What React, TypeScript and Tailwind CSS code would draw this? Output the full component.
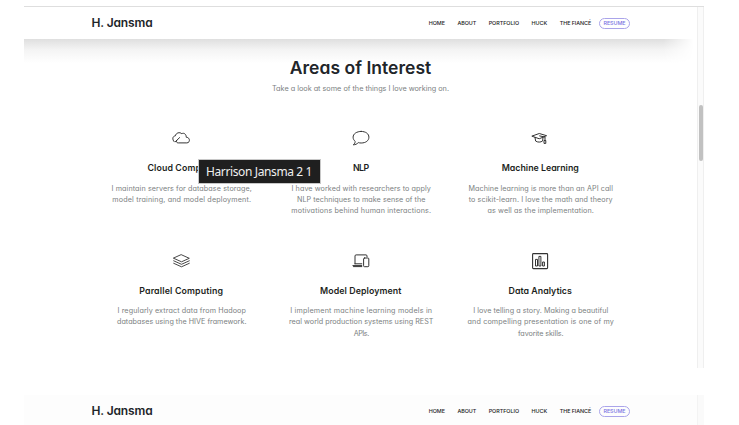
import type { ReactNode } from "react";

type Line = { text: string; tracking: string };

type Area = { icon: ReactNode; title: Line; lines: Line[] };

const iconProps = {
  fill: "none",
  stroke: "#333",
  strokeWidth: 1,
  strokeLinecap: "round" as const,
  strokeLinejoin: "round" as const,
  className: "h-[18px] w-[18px]",
  viewBox: "0 0 18 18",
};

const CloudIcon = () => (
  <svg {...iconProps}>
    <path d="M3.4 12.6 L7.6 8.6 M2.4 12.9 C-.1 10.6 .4 7.2 3.4 6.8 C3.9 3.9 7.6 2.7 9.8 4.7 C12 3.4 14.4 5.4 14.2 8.2 C18.3 8.3 18.4 13.9 14.8 13.9 H6.3 C4.4 13.9 4 12.6 4.6 11.6" />
  </svg>
);

const BubbleIcon = () => (
  <svg {...iconProps}>
    <path d="M9.2 2.4 C13.8 2.4 16.9 4.8 16.9 8.2 C16.9 11.6 13.8 14 9.2 14 C8.2 14 7.2 13.9 6.3 13.6 C5.1 14.9 3.4 15.8 1.3 15.8 C2.5 14.8 3.1 13.8 3.2 12.4 C1.8 11.3 1.1 9.8 1.1 8.2 C1.1 4.8 4.7 2.4 9.2 2.4 Z" />
  </svg>
);

const CapIcon = () => (
  <svg {...iconProps}>
    <path d="M1.2 7 L8.3 4.5 L15.6 6.7 L8.6 9.6 Z M4 8.4 L4.6 12 C6.6 13.5 9.8 13.4 11.6 12 L12 8.6 M8.6 6.9 L14 8 V11.5 M13.4 11.5 H14.8 V14.4 H13.4 Z" />
  </svg>
);

const LayersIcon = () => (
  <svg {...iconProps} strokeWidth={0.9}>
    <path d="M9.5 2.8 L17.3 6.3 L9.5 9.8 L1.7 6.3 Z M1.7 8.8 L9.5 12.3 L17.3 8.8 M1.7 11.3 L9.5 14.8 L17.3 11.3" />
  </svg>
);

const DevicesIcon = () => (
  <svg {...iconProps}>
    <path d="M3 11.8 V4 Q3 2.9 4.1 2.9 H14 Q15 2.9 15 4 V4.8 M3 11.8 H9.8 M.9 13.6 H9.8 M1.5 14.6 H9.8" />
    <rect x="11.6" y="6" width="5.2" height="8.7" rx=".9" />
  </svg>
);

const ChartIcon = () => (
  <svg {...iconProps}>
    <rect x="1.6" y="1.6" width="15" height="15" rx=".8" strokeWidth="1.1" />
    <path d="M4.9 7.4 H6.5 V14 H4.9 Z M8.3 4.4 H9.9 V14 H8.3 Z M12 10 H13.4 V14 H12 Z" />
  </svg>
);

const areas: Area[] = [
  {
    icon: <CloudIcon />,
    title: { text: "Cloud Compute", tracking: "tracking-[0.12px]" },
    lines: [
      { text: "I maintain servers for database storage,", tracking: "tracking-[0.098px]" },
      { text: "model training, and model deployment.", tracking: "tracking-[0.165px]" },
    ],
  },
  {
    icon: <BubbleIcon />,
    title: { text: "NLP", tracking: "tracking-[-0.6px]" },
    lines: [
      { text: "I have worked with researchers to apply", tracking: "tracking-[0.072px]" },
      { text: "NLP techniques to make sense of the", tracking: "tracking-[0.046px]" },
      { text: "motivations behind human interactions.", tracking: "tracking-[0.151px]" },
    ],
  },
  {
    icon: <CapIcon />,
    title: { text: "Machine Learning", tracking: "tracking-[0px]" },
    lines: [
      { text: "Machine learning is more than an API call", tracking: "tracking-[0.069px]" },
      { text: "to scikit-learn. I love the math and theory", tracking: "tracking-[0.091px]" },
      { text: "as well as the implementation.", tracking: "tracking-[0.11px]" },
    ],
  },
  {
    icon: <LayersIcon />,
    title: { text: "Parallel Computing", tracking: "tracking-[0.159px]" },
    lines: [
      { text: "I regularly extract data from Hadoop", tracking: "tracking-[0.107px]" },
      { text: "databases using the HIVE framework.", tracking: "tracking-[0.019px]" },
    ],
  },
  {
    icon: <DevicesIcon />,
    title: { text: "Model Deployment", tracking: "tracking-[0.093px]" },
    lines: [
      { text: "I implement machine learning models in", tracking: "tracking-[0.178px]" },
      { text: "real world production systems using REST", tracking: "tracking-[0.023px]" },
      { text: "APIs.", tracking: "tracking-[-0.45px]" },
    ],
  },
  {
    icon: <ChartIcon />,
    title: { text: "Data Analytics", tracking: "tracking-[0.028px]" },
    lines: [
      { text: "I love telling a story. Making a beautiful", tracking: "tracking-[0.037px]" },
      { text: "and compelling presentation is one of my", tracking: "tracking-[0.148px]" },
      { text: "favorite skills.", tracking: "tracking-[-0.09px]" },
    ],
  },
];

function Navbar({ className }: { className: string }) {
  return (
    <header className={`flex h-8 items-center pr-[67px] pl-[67.5px] ${className}`}>
      <span className="text-[12px] leading-4 font-semibold tracking-[-0.13px] text-[#212529]">H. Jansma</span>
      <nav className="ml-auto flex items-center text-[5.4px] leading-[8px] font-medium text-[#222]">
        <span className="w-[28.8px] tracking-[0.043px]">HOME</span>
        <span className="w-[31.2px] tracking-[-0.063px]">ABOUT</span>
        <span className="w-[42.9px] tracking-[-0.007px]">PORTFOLIO</span>
        <span className="w-[28.2px]">HUCK</span>
        <span className="w-[39.3px] tracking-[-0.048px]">THE FIANCÉ</span>
        <span className="flex h-[11px] w-[31px] items-center justify-center rounded-full border border-[#aaa4ea] tracking-[-0.065px] text-[#7a72e2]">
          RESUME
        </span>
      </nav>
    </header>
  );
}

function AreaCard({ icon, title, lines }: Area) {
  return (
    <article className="flex flex-col items-center whitespace-nowrap">
      {icon}
      <h3 className={`mt-[14px] text-[8.8px] leading-[14px] font-semibold text-[#1d1f22] ${title.tracking}`}>
        {title.text}
      </h3>
      <div className="mt-[7.5px] pl-px text-center text-[7.2px] leading-[11.3px] text-[#7c7f82]">
        {lines.map((line) => (
          <p key={line.text} className={line.tracking}>
            {line.text}
          </p>
        ))}
      </div>
    </article>
  );
}

export default function App() {
  return (
    <div className="h-[425px] w-[739px] overflow-hidden bg-white pt-[6px] pl-6 font-['Inter',sans-serif] [font-feature-settings:'cv11']">
      <div className="relative flex h-[362px] w-[680px] border-t border-[#dedede]">
        <main className="w-[673px] overflow-hidden">
          <Navbar className="bg-white" />
          <div className="h-[24px] bg-linear-to-b from-[#dfdfdf] via-[#f4f4f4] via-45% to-white [mask-image:linear-gradient(to_right,black_95%,transparent_99.5%)]" />
          <section className="relative -mt-[8px] px-[67px] text-center">
            <h2 className="text-[17.5px] leading-[26px] font-semibold tracking-[0.026px] text-[#212529]">Areas of Interest</h2>
            <p className="mt-[2px] text-[7.3px] leading-[12px] tracking-[-0.014px] text-[#7c7f82]">
              Take a look at some of the things I love working on.
            </p>
            <div className="mt-[34px] ml-[0.5px] grid grid-cols-[repeat(3,179.5px)] grid-rows-[122.5px_auto]">
              {areas.map((area) => (
                <AreaCard key={area.title.text} {...area} />
              ))}
            </div>
          </section>
        </main>
        <aside className="w-[7px] border-x border-[#efefef] bg-[#fbfbfb] pt-[98px]">
          <div className="ml-px h-[56px] w-[4px] rounded-xs bg-[#c1c1c1]" />
        </aside>
        <div className="absolute top-[152px] left-[174px] flex h-[25px] w-[123px] items-center border border-[#c8c8c8] bg-[#1f1f1f] pl-[7px] font-['Noto_Sans',sans-serif] text-[12px] tracking-[-0.38px] whitespace-nowrap text-[#f0f0f0]">
          Harrison Jansma 2 1
        </div>
      </div>
      <div className="mt-[27px] flex h-[30px] w-[680px] overflow-hidden bg-[#fdfdfd]">
        <div className="w-[673px]">
          <Navbar className="bg-[#fdfdfd]" />
        </div>
        <aside className="w-[7px] border-l border-[#f3f3f3] bg-[#fafafa]" />
      </div>
    </div>
  );
}
